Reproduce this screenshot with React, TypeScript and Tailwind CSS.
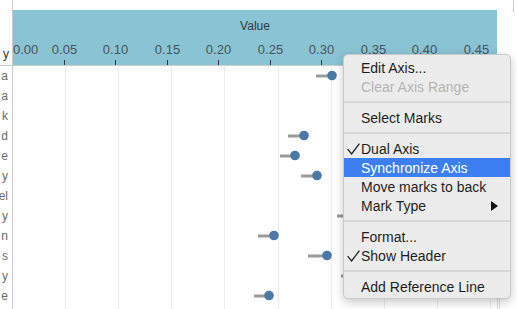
import React from "react";

const ticks = ["0.00", "0.05", "0.10", "0.15", "0.20", "0.25", "0.30", "0.35", "0.40", "0.45"];
const rows = ["a", "a", "k", "d", "e", "y", "el", "y", "n", "s", "y", "e"];

// x offsets inside the plot pane (pane starts at x=13)
const marks: ({ from: number; to: number } | null)[] = [
  { from: 303, to: 319 },
  { from: 380, to: 396 },
  { from: 400, to: 416 },
  { from: 275, to: 291 },
  { from: 267, to: 282 },
  { from: 288, to: 304 },
  { from: 410, to: 426 },
  { from: 324, to: 340 },
  { from: 245, to: 261 },
  { from: 295, to: 314 },
  { from: 328, to: 344 },
  { from: 241, to: 256 },
];

type Item =
  | { kind: "sep" }
  | { kind: "item"; label: string; checked?: boolean; disabled?: boolean; active?: boolean; submenu?: boolean };

const menu: Item[] = [
  { kind: "item", label: "Edit Axis..." },
  { kind: "item", label: "Clear Axis Range", disabled: true },
  { kind: "sep" },
  { kind: "item", label: "Select Marks" },
  { kind: "sep" },
  { kind: "item", label: "Dual Axis", checked: true },
  { kind: "item", label: "Synchronize Axis", active: true },
  { kind: "item", label: "Move marks to back" },
  { kind: "item", label: "Mark Type", submenu: true },
  { kind: "sep" },
  { kind: "item", label: "Format..." },
  { kind: "item", label: "Show Header", checked: true },
  { kind: "sep" },
  { kind: "item", label: "Add Reference Line" },
];

function Check() {
  return (
    <svg width="13" height="12" viewBox="0 0 13 12" className="absolute left-[3px] top-[4px]">
      <path d="M0.6 6.2 L4.6 11 L12.4 0.6" fill="none" stroke="#222" strokeWidth="1.3" />
    </svg>
  );
}

function ContextMenu() {
  return (
    <div className="absolute left-[343px] top-[54px] w-[168px] rounded-[5px] border border-[#c9c9c9] bg-[#ececec] pt-[3px] pb-[2px] text-[14px] shadow-[0_3px_10px_rgba(0,0,0,0.22)]">
      {menu.map((m, i) =>
        m.kind === "sep" ? (
          <div key={i} className="flex h-[12px] items-center">
            <div className="h-[2px] w-full bg-[#d7d7d7]" />
          </div>
        ) : (
          <div
            key={i}
            className={`relative flex h-[19px] items-center pl-[17px] leading-none ${
              m.active ? "bg-[#3d7ff2] text-white" : m.disabled ? "text-[#b4b4b4]" : "text-[#1e1e1e]"
            }`}
          >
            {m.checked && <Check />}
            <span>{m.label}</span>
            {m.submenu && (
              <svg width="7" height="10" viewBox="0 0 7 10" className="absolute right-[12px] top-[5px]">
                <polygon points="0,0 7,5 0,10" fill="#111" />
              </svg>
            )}
          </div>
        )
      )}
    </div>
  );
}

export default function App() {
  const tickX = (k: number) => Math.round(51.55 * k) - 1;
  const gridX = (k: number) => Math.round(53.1 * (k + 1)) - 0.5;

  return (
    <div className="relative h-[309px] w-[517px] overflow-hidden bg-white font-['Liberation_Sans',Arial,sans-serif]">
      <div className="flex h-full">
        {/* row labels */}
        <div className="flex w-[12px] shrink-0 flex-col">
          <div className="h-[10px]" />
          <div className="flex h-[56px] items-end justify-end border-b border-[#cccccc] pb-[5px] pr-[3px] text-[12px] leading-none text-[#333]">
            y
          </div>
          {rows.map((r, i) => (
            <div
              key={i}
              className="flex h-[20px] items-center justify-end whitespace-nowrap pr-[4px] text-[12px] leading-none text-[#6b6b6b]"
            >
              {r}
            </div>
          ))}
        </div>

        {/* chart pane */}
        <div className="flex w-[485px] shrink-0 flex-col border-l border-[#cccccc]">
          <div className="h-[10px]" />
          <div className="relative h-[56px] border-b border-[#cccccc] bg-[#8ac3d3]">
            <div className="pt-[10px] text-center text-[12px] leading-none text-[#2c3a40]">Value</div>
            {ticks.map((t, k) => (
              <React.Fragment key={t}>
                <span
                  className={`absolute top-[33px] text-[13px] leading-none text-[#45555c] ${
                    k === 0 ? "left-0" : "-translate-x-1/2"
                  }`}
                  style={k === 0 ? undefined : { left: tickX(k) + 0.5 }}
                >
                  {t}
                </span>
                {k > 0 && (
                  <span className="absolute top-[50px] h-[5px] w-px bg-[#333]" style={{ left: tickX(k) }} />
                )}
              </React.Fragment>
            ))}
          </div>
          <div className="relative flex-1">
            <svg width="484" height="243" className="absolute left-0 top-0">
              {Array.from({ length: 9 }, (_, k) => (
                <line key={k} x1={gridX(k)} x2={gridX(k)} y1="0" y2="243" stroke="#ededed" strokeWidth="1.2" />
              ))}
              {marks.map((m, i) =>
                m ? (
                  <g key={i}>
                    <line x1={m.from} x2={m.to} y1={10 + i * 20} y2={10 + i * 20} stroke="#9a9a9a" strokeWidth="3" />
                    <circle cx={m.to} cy={9.5 + i * 20} r="4.8" fill="#4b78a8" />
                  </g>
                ) : null
              )}
            </svg>
          </div>
        </div>

        {/* right edge */}
        <div className="relative flex-1">
          <div className="absolute left-[16px] top-0 h-[12px] w-px bg-[#cccccc]" />
          <div className="absolute left-[0px] top-[66px] bottom-0 w-px bg-[#dddddd]" />
          <div className="absolute left-[2px] top-[66px] bottom-0 w-px bg-[#dddddd]" />
        </div>
      </div>

      <ContextMenu />
    </div>
  );
}
